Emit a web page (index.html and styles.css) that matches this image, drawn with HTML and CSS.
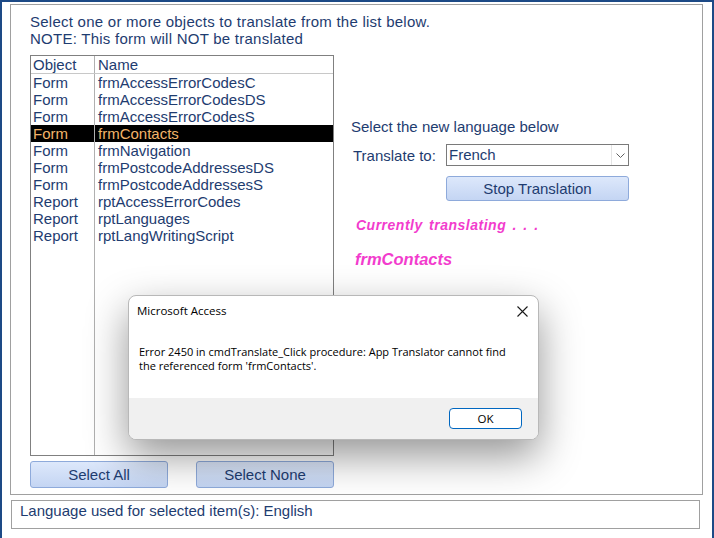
FILE: index.html
```html
<!DOCTYPE html>
<html lang="en">

<head>
    <meta charset="UTF-8">
    <title>App Translator</title>
    <link rel="stylesheet" href="styles.css">
</head>

<body>
    <div class="window">
        <div class="frame">
            <p class="intro">Select one or more objects to translate from the list below.<br>NOTE: This form will NOT be translated</p>
            <div class="columns">
                <div class="left-col">
                    <div class="listbox">
                        <div class="list-row list-head"><span class="col-obj">Object</span><span class="col-name">Name</span></div>
                        <div class="list-row"><span class="col-obj">Form</span><span class="col-name">frmAccessErrorCodesC</span></div>
                        <div class="list-row"><span class="col-obj">Form</span><span class="col-name">frmAccessErrorCodesDS</span></div>
                        <div class="list-row"><span class="col-obj">Form</span><span class="col-name">frmAccessErrorCodesS</span></div>
                        <div class="list-row selected"><span class="col-obj">Form</span><span class="col-name">frmContacts</span></div>
                        <div class="list-row"><span class="col-obj">Form</span><span class="col-name">frmNavigation</span></div>
                        <div class="list-row"><span class="col-obj">Form</span><span class="col-name">frmPostcodeAddressesDS</span></div>
                        <div class="list-row"><span class="col-obj">Form</span><span class="col-name">frmPostcodeAddressesS</span></div>
                        <div class="list-row"><span class="col-obj">Report</span><span class="col-name">rptAccessErrorCodes</span></div>
                        <div class="list-row"><span class="col-obj">Report</span><span class="col-name">rptLanguages</span></div>
                        <div class="list-row"><span class="col-obj">Report</span><span class="col-name">rptLangWritingScript</span></div>
                        <div class="list-fill"><span class="col-obj"></span><span class="col-name"></span></div>
                    </div>
                    <div class="list-buttons">
                        <button class="btn">Select All</button>
                        <button class="btn">Select None</button>
                    </div>
                </div>
                <div class="right-col">
                    <p class="lang-title">Select the new language below</p>
                    <div class="translate-row">
                        <label for="lang">Translate to:</label>
                        <div class="combo" id="lang">
                            <span class="combo-value">French</span>
                            <span class="combo-arrow">
                                <svg width="9" height="5" viewBox="0 0 9 5"><path d="M0.5 0.5 L4.5 4.5 L8.5 0.5" fill="none" stroke="#606060" stroke-width="1"/></svg>
                            </span>
                        </div>
                    </div>
                    <button class="btn btn-stop">Stop Translation</button>
                    <p class="status-busy">Currently translating . . .</p>
                    <p class="status-item">frmContacts</p>
                </div>
            </div>
        </div>
        <div class="status-box">Language used for selected item(s): English</div>

        <div class="dialog" role="alertdialog" aria-labelledby="dlg-title">
            <div class="dialog-head">
                <span id="dlg-title">Microsoft Access</span>
                <svg class="dialog-close" width="11" height="11" viewBox="0 0 11 11"><path d="M0.5 0.5 L10.5 10.5 M10.5 0.5 L0.5 10.5" stroke="#1a1a1a" stroke-width="1.1"/></svg>
            </div>
            <div class="dialog-body">Error 2450 in cmdTranslate_Click procedure: App Translator cannot find<br>the referenced form 'frmContacts'.</div>
            <div class="dialog-foot">
                <button class="dialog-ok">OK</button>
            </div>
        </div>
    </div>
</body>

</html>
```

FILE: styles.css
```css
body {
    margin: 0;
    font-family: "Liberation Sans", Arial, sans-serif;
    color: #1e3c70;
    background: #fff;
}

.window {
    position: relative;
    width: 710px;
    height: 536px;
    border: 2px solid #1d4a86;
    border-bottom: none;
    overflow: hidden;
}

.frame {
    margin: 2px 9px 0 8px;
    border: 1px solid #a0a0a0;
    padding: 8px 0 6px 19px;
    font-size: 15px;
}

.intro {
    margin: 0;
    line-height: 17px;
    letter-spacing: 0.25px;
}

.columns {
    display: flex;
    margin-top: 8px;
}

.left-col {
    width: 304px;
}

.listbox {
    height: 399px;
    border: 1px solid #808080;
    display: flex;
    flex-direction: column;
    line-height: 17px;
}

.list-row {
    display: flex;
    height: 17px;
}

.list-head {
    border-bottom: 1px solid #c8c8c8;
}

.col-obj {
    width: 61px;
    padding-left: 2px;
    border-right: 1px solid #b0b0b0;
}

.col-name {
    padding-left: 3px;
    white-space: nowrap;
}

.selected {
    background: #000;
    color: #f2b46a;
}

.list-fill {
    flex: 1;
    display: flex;
}

.list-buttons {
    display: flex;
    justify-content: space-between;
    margin-top: 5px;
}

.btn {
    width: 138px;
    height: 27px;
    font-family: inherit;
    font-size: 15px;
    color: #1e3c70;
    border: 1px solid #8eaadb;
    border-radius: 3px;
    background: linear-gradient(#dde8fb, #c4d5f3);
}

.right-col {
    margin-left: 17px;
    padding-top: 63px;
}

.lang-title {
    margin: 0;
    line-height: 17px;
}

.translate-row {
    display: flex;
    align-items: center;
    margin-top: 9px;
}

.translate-row label {
    width: 93px;
    padding-left: 2px;
}

.combo {
    display: flex;
    width: 181px;
    height: 20px;
    border: 1px solid #7a7a7a;
    background: #fff;
    line-height: 20px;
}

.combo-value {
    flex: 1;
    padding-left: 2px;
}

.combo-arrow {
    width: 16px;
    border-left: 1px solid #e4e4e4;
    display: flex;
    align-items: center;
    justify-content: center;
}

.btn-stop {
    display: block;
    width: 183px;
    height: 25px;
    margin: 10px 0 0 95px;
}

.status-busy {
    margin: 16px 0 0 5px;
    color: #f23ccd;
    font-weight: bold;
    font-style: italic;
    font-size: 14px;
    letter-spacing: 0.5px;
    word-spacing: 2px;
}

.status-item {
    margin: 17px 0 0 4px;
    color: #f23ccd;
    font-weight: bold;
    font-style: italic;
    font-size: 16.5px;
}

.status-box {
    margin: 5px 12px 0 9px;
    height: 27px;
    border: 1px solid #a0a0a0;
    padding-left: 8px;
    font-size: 15px;
    line-height: 19px;
}

.dialog {
    position: absolute;
    left: 126px;
    top: 293px;
    width: 409px;
    height: 143px;
    border: 1px solid #b8b8b8;
    border-radius: 8px;
    background: #fff;
    box-shadow: 0 16px 42px rgba(0, 0, 0, 0.42);
    overflow: hidden;
    font-family: "Open Sans", "Noto Sans", sans-serif;
    font-size: 11px;
    color: #000;
    display: flex;
    flex-direction: column;
}

.dialog-head {
    display: flex;
    justify-content: space-between;
    align-items: center;
    padding: 7px 10px 0 8px;
    font-size: 11.5px;
}

.dialog-close {
    margin-top: 2px;
}

.dialog-body {
    padding: 27px 0 0 10px;
    line-height: 14px;
    flex: 1;
}

.dialog-foot {
    height: 41px;
    background: #f0f0f0;
    display: flex;
    justify-content: flex-end;
    align-items: center;
    padding-right: 16px;
}

.dialog-ok {
    width: 73px;
    height: 21px;
    border: 1px solid #0067c0;
    border-radius: 4px;
    background: #fff;
    font-family: inherit;
    font-size: 11.5px;
    color: #000;
}
```
